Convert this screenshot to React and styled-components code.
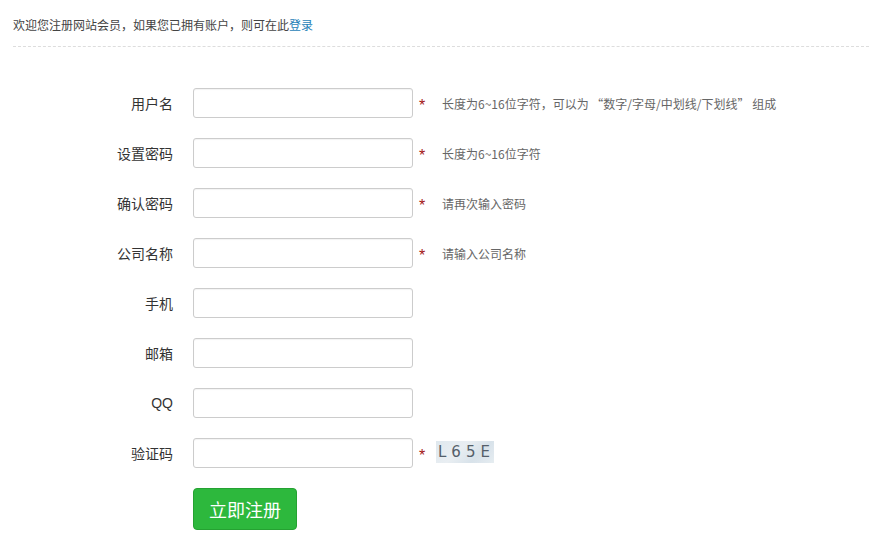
import React from "react";
import styled, { createGlobalStyle } from "styled-components";

const Global = createGlobalStyle`
  html, body { margin: 0; padding: 0; background: #fff; }
  body { font-family: "Liberation Sans", "Noto Sans CJK SC", sans-serif; color: #333; }
  * { box-sizing: border-box; }
`;

const Page = styled.div`
  width: 869px;
  height: 553px;
  overflow: hidden;
`;

const Header = styled.div`
  margin-left: 13px;
  height: 47px;
  padding-top: 17px;
  font-size: 12px;
  line-height: 18px;
  color: #444;
  border-bottom: 1px dashed #ddd;
`;

const Link = styled.a`
  color: #1f7fb8;
  text-decoration: none;
`;

const Form = styled.div`
  display: flex;
  flex-direction: column;
  gap: 20px;
  padding-top: 41px;
`;

const Row = styled.div`
  display: flex;
  align-items: center;
  height: 30px;
`;

const Label = styled.label`
  width: 173px;
  text-align: right;
  font-size: 14px;
  color: #333;
  margin-right: 20px;
`;

const Input = styled.input`
  width: 220px;
  height: 30px;
  border: 1px solid #ccc;
  border-radius: 3px;
  background: #fff;
  outline: none;
  box-shadow: inset 0 1px 1px rgba(0,0,0,0.05);
`;

const Star = styled.span`
  color: #a31515;
  font-size: 16px;
  margin-left: 6px;
  width: 16px;
  line-height: 16px;
  padding-top: 6px;
`;

const Hint = styled.span`
  font-family: "Noto Sans CJK SC", sans-serif;
  font-size: 12px;
  color: #666;
  margin-left: 7px;
`;

const Captcha = styled.span`
  margin-left: 1px;
  width: 58px;
  height: 22px;
  background: linear-gradient(135deg, #dfe8ee 0%, #e9eef2 40%, #d8e2ea 70%, #e6edf1 100%);
  color: #555f6a;
  font-family: "DejaVu Sans", sans-serif;
  font-size: 15px;
  letter-spacing: 5px;
  line-height: 22px;
  padding-left: 2px;
  margin-bottom: 2px;
`;

const Submit = styled.button`
  margin-left: 193px;
  width: 104px;
  height: 42px;
  background: #2db83d;
  border: 1px solid #25a232;
  border-radius: 4px;
  color: #fff;
  font-size: 18px;
  font-family: "Noto Sans CJK SC", sans-serif;
  cursor: pointer;
`;

const fields = [
  { label: "用户名", req: true, hint: "长度为6~16位字符，可以为 “数字/字母/中划线/下划线” 组成" },
  { label: "设置密码", req: true, hint: "长度为6~16位字符" },
  { label: "确认密码", req: true, hint: "请再次输入密码" },
  { label: "公司名称", req: true, hint: "请输入公司名称" },
  { label: "手机" },
  { label: "邮箱" },
  { label: "QQ" },
  { label: "验证码", req: true, captcha: true },
];

export default function App() {
  return (
    <Page>
      <Global />
      <Header>
        欢迎您注册网站会员，如果您已拥有账户，则可在此<Link href="#">登录</Link>
      </Header>
      <Form>
        {fields.map((f) => (
          <Row key={f.label}>
            <Label>{f.label}</Label>
            <Input type="text" />
            {f.req && <Star>*</Star>}
            {f.hint && <Hint>{f.hint}</Hint>}
            {f.captcha && <Captcha>L65E</Captcha>}
          </Row>
        ))}
        <Submit>立即注册</Submit>
      </Form>
    </Page>
  );
}
